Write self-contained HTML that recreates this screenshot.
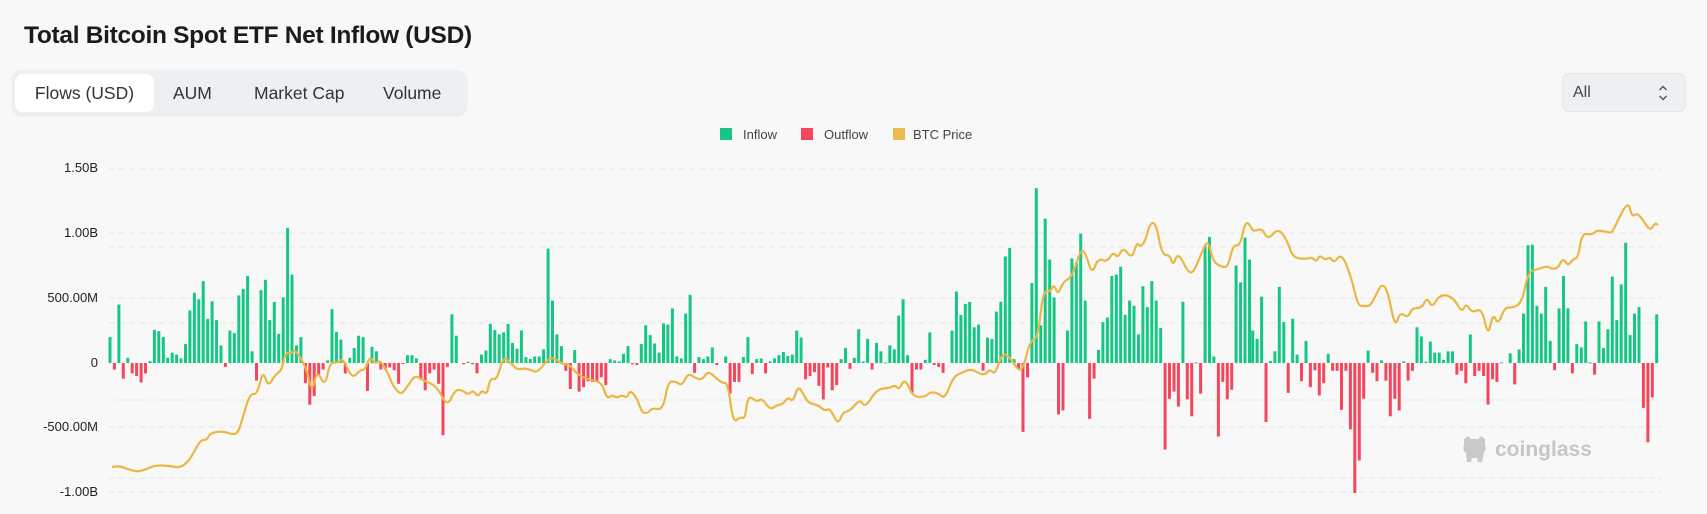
<!DOCTYPE html>
<html><head><meta charset="utf-8">
<style>
html,body{margin:0;padding:0;}
body{width:1707px;height:514px;background:#f8f8f8;font-family:"Liberation Sans",sans-serif;position:relative;overflow:hidden;color:#222;}
.title{position:absolute;left:24px;top:22px;font-size:24.5px;font-weight:bold;letter-spacing:-0.3px;color:#1b1b1b;}
.tabs{position:absolute;left:12px;top:70px;width:455px;height:45px;background:#edf0f3;border-radius:10px;box-shadow:0 1px 2px rgba(0,0,0,0.08);}
.tab{position:absolute;top:4px;height:38px;line-height:38px;font-size:17.5px;color:#333;}
.tab.act{background:#fff;border-radius:8px;left:3px;width:139px;text-align:center;}
.sel{position:absolute;left:1562px;top:73px;width:124px;height:39px;background:#edf0f3;border:1px solid #e2e5e9;border-radius:7px;box-sizing:border-box;}
.sel span{position:absolute;left:10px;top:10px;font-size:16px;color:#444;}
.leg{position:absolute;top:127px;font-size:13px;color:#444;}
.sq{position:absolute;top:128px;width:12px;height:12px;}
.yl{position:absolute;right:1609px;font-size:13px;color:#222;text-align:right;white-space:nowrap;}
</style></head><body>
<div class="title">Total Bitcoin Spot ETF Net Inflow (USD)</div>
<div class="tabs">
<div class="tab act">Flows (USD)</div>
<div class="tab" style="left:161px">AUM</div>
<div class="tab" style="left:242px">Market Cap</div>
<div class="tab" style="left:371px">Volume</div>
</div>
<div class="sel"><span>All</span>
<svg style="position:absolute;left:94px;top:9px" width="12" height="20" viewBox="0 0 12 20"><path d="M2.5 7 L6 3.5 L9.5 7 M2.5 13 L6 16.5 L9.5 13" fill="none" stroke="#555" stroke-width="1.4"/></svg></div>
<div class="sq" style="left:720px;background:#16c784"></div><div class="leg" style="left:743px">Inflow</div>
<div class="sq" style="left:801px;background:#f4475e"></div><div class="leg" style="left:824px">Outflow</div>
<div class="sq" style="left:893px;background:#ebbb4e"></div><div class="leg" style="left:913px">BTC Price</div>
<div class="yl" style="top:160px">1.50B</div>
<div class="yl" style="top:225px">1.00B</div>
<div class="yl" style="top:290px">500.00M</div>
<div class="yl" style="top:355px">0</div>
<div class="yl" style="top:419px">-500.00M</div>
<div class="yl" style="top:484px">-1.00B</div>
<svg id="ch" style="position:absolute;left:0;top:0" width="1707" height="514"></svg>
<div style="position:absolute;left:1461px;top:435px;width:27px;height:30px;">
<svg width="27" height="30" viewBox="0 0 27 30"><path d="M3 4 L7 1 L10 4 L17 4 L20 1 L24 4 L24 10 Q26 14 23 17 L21 27 L17 27 L16 23 L11 23 L10 27 L6 27 L5 18 Q1 15 3 10 Z" fill="#c9c9c9"/></svg></div>
<div style="position:absolute;left:1495px;top:438px;font-size:21px;font-weight:bold;color:#c6c6c6;">coinglass</div>
<script>
var svg=document.getElementById('ch');var NS='http://www.w3.org/2000/svg';
function el(t,a){var e=document.createElementNS(NS,t);for(var k in a)e.setAttribute(k,a[k]);svg.appendChild(e);return e;}
[169,233,247,298,323,400,427,478,492].forEach(function(y){el('line',{x1:109,x2:1662,y1:y,y2:y,stroke:'#e6e6e6','stroke-width':1,'stroke-dasharray':'6,4'});});
var segs=[
[110,[200,-50,450,-120,40,-80,-100,-150,-80,15,255,245,200,40,80,65,35,145,405,540,490,630,340,475,330,135,-30,250,230,520,570,670,90,-135,560,640,330,470,225,505,1040,680,135,200,-155,-320,-255,-90,-50,20,415,240,180,-80,40,115,210,200,-215,125,90,-50,-50,-35,-55,-160,-5,60,60,35,-120,-210,-80,-50,-160,-555,-30,375,210]],
[463.7,[-10,10,-10,-80,65,95,300,255,220,235,300,155,110,250,45,30,50,50,105,880,480,220,130,-60,-200,100,-220,-185,-140,-145,-145,-110,-170,30,20,12,70,130,-10,-15,145,290,215,150,80,305,295,420,50,35,380,525,-75,45,30,50,120,-15,0,50,-235,-145,-145,45,200,-85,30,35,-80,12,35,60,85,55,65,250,195,-125,-100,-70,-175,-280,-35,-210,-170,30,115,-45]],
[854.3,[40,260,12,185,-50,155,90,5,135,105,365,490,60,-235,-50,-50,25,235,-15,-30,-75,0,250,550,370,455,470,275,295,-60,195,185,395,470,820,885,30,-50,-530,-110,615,1345,290,1110,795,505,-395,-365,250,805,770,995,480,-430,-120,100,315,350,670,680,740,370,480,440,220,590,430,630,480,270,-665,-275,-220,-335,470,-280,-410,5,-235,900,970,50,-565,-145,-280,-205,750,620,965,795]],
[1252.7,[250,185,510,-455,15,90,585,315,-230,340,65,-140,170,-185,-55,-250,-155,70,-60,-60,-360,-60,-510,-1000,-750,-275,95,-75,-140,20,-135,-410,-275,-365,12,-135,-60,275,205,10,165,80,80,25,90,90,-90,-60,-155,220,-100,-60,-100,-320,-125,-145,5,0,75,-165,105,380,905,910,440,380,585,170,-55,420,670,420,-80,145,120,320,5,-90,320,115,260,665,330,605,925,215,380,430,-345,-610,-265,375]]];
var step=4.44,k=65/500;
segs.forEach(function(s){s[1].forEach(function(v,i){if(v==0)return;var x=s[0]+i*step-1.5;var h=Math.abs(v)*k;
el('rect',{x:x.toFixed(1),y:(v>0?363-h:363).toFixed(1),width:3,height:Math.max(h,1).toFixed(1),fill:v>0?'#16c784':'#f4475e'});});});
var p=[[112,467],[120,466],[130,470],[140,472],[155,465],[170,466],[180,468],[190,460],[200,440],[207,440],[210,433],[223,431],[237,436],[242,420],[250,393],[257,395],[263,370],[268,387],[275,375],[282,370],[285,353],[292,353],[295,350],[300,357],[307,370],[312,393],[317,370],[325,387],[330,362],[338,363],[343,358],[352,379],[360,370],[365,370],[370,356],[375,364],[380,360],[388,373],[393,386],[401,395],[407,387],[415,375],[422,380],[437,386],[447,407],[455,390],[462,390],[468,395],[473,390],[478,397],[482,390],[487,395],[490,378],[497,380],[503,357],[510,362],[517,370],[525,368],[533,371],[538,372],[548,359],[555,358],[562,364],[570,365],[575,372],[582,377],[592,380],[602,383],[607,399],[612,395],[617,398],[622,395],[627,398],[630,390],[637,398],[642,413],[648,413],[652,408],[663,410],[668,382],[675,381],[682,386],[688,373],[695,378],[702,380],[708,371],[715,377],[722,383],[728,383],[733,423],[740,417],[745,419],[748,395],[757,402],[762,398],[770,410],[777,405],[783,404],[788,397],[793,402],[798,386],[803,393],[808,403],[818,405],[825,411],[830,408],[838,425],[843,412],[850,411],[860,399],[865,408],[877,389],[890,388],[895,385],[899,390],[905,378],[913,397],[925,397],[930,392],[938,393],[945,399],[953,377],[963,372],[972,369],[978,373],[985,375],[990,369],[995,375],[1002,353],[1010,357],[1018,370],[1023,369],[1030,341],[1038,338],[1043,291],[1050,292],[1054,284],[1058,295],[1063,282],[1072,277],[1080,251],[1085,251],[1092,275],[1098,258],[1107,262],[1113,252],[1118,258],[1123,247],[1132,259],[1137,242],[1140,247],[1145,242],[1150,223],[1156,223],[1162,255],[1170,255],[1173,266],[1178,252],[1188,272],[1193,273],[1200,257],[1208,238],[1213,262],[1222,267],[1228,267],[1233,245],[1240,246],[1245,223],[1249,223],[1253,232],[1262,228],[1268,240],[1278,228],[1287,240],[1293,258],[1307,259],[1312,257],[1316,262],[1320,255],[1325,260],[1330,257],[1334,263],[1342,253],[1352,280],[1358,306],[1365,306],[1370,306],[1375,297],[1382,283],[1388,292],[1395,328],[1400,312],[1408,318],[1412,308],[1422,308],[1427,297],[1432,308],[1440,294],[1453,297],[1462,313],[1466,303],[1472,313],[1482,308],[1488,337],[1493,313],[1498,325],[1505,307],[1512,308],[1522,303],[1528,272],[1538,269],[1547,266],[1552,269],[1558,268],[1563,258],[1568,266],[1573,259],[1578,258],[1582,233],[1592,235],[1597,230],[1607,232],[1612,233],[1617,222],[1628,201],[1632,217],[1637,213],[1643,220],[1650,231],[1655,223],[1658,225]];
var d='M'+p[0][0]+' '+p[0][1];for(var i=1;i<p.length;i++){var a=p[i-1],b=p[i];var mx=(a[0]+b[0])/2;d+=' Q'+a[0]+' '+a[1]+' '+mx+' '+((a[1]+b[1])/2);}d+=' L'+p[p.length-1][0]+' '+p[p.length-1][1];
el('path',{d:d,fill:'none',stroke:'#ebb744','stroke-width':2.2,'stroke-linejoin':'round'});
</script>
</body></html>
